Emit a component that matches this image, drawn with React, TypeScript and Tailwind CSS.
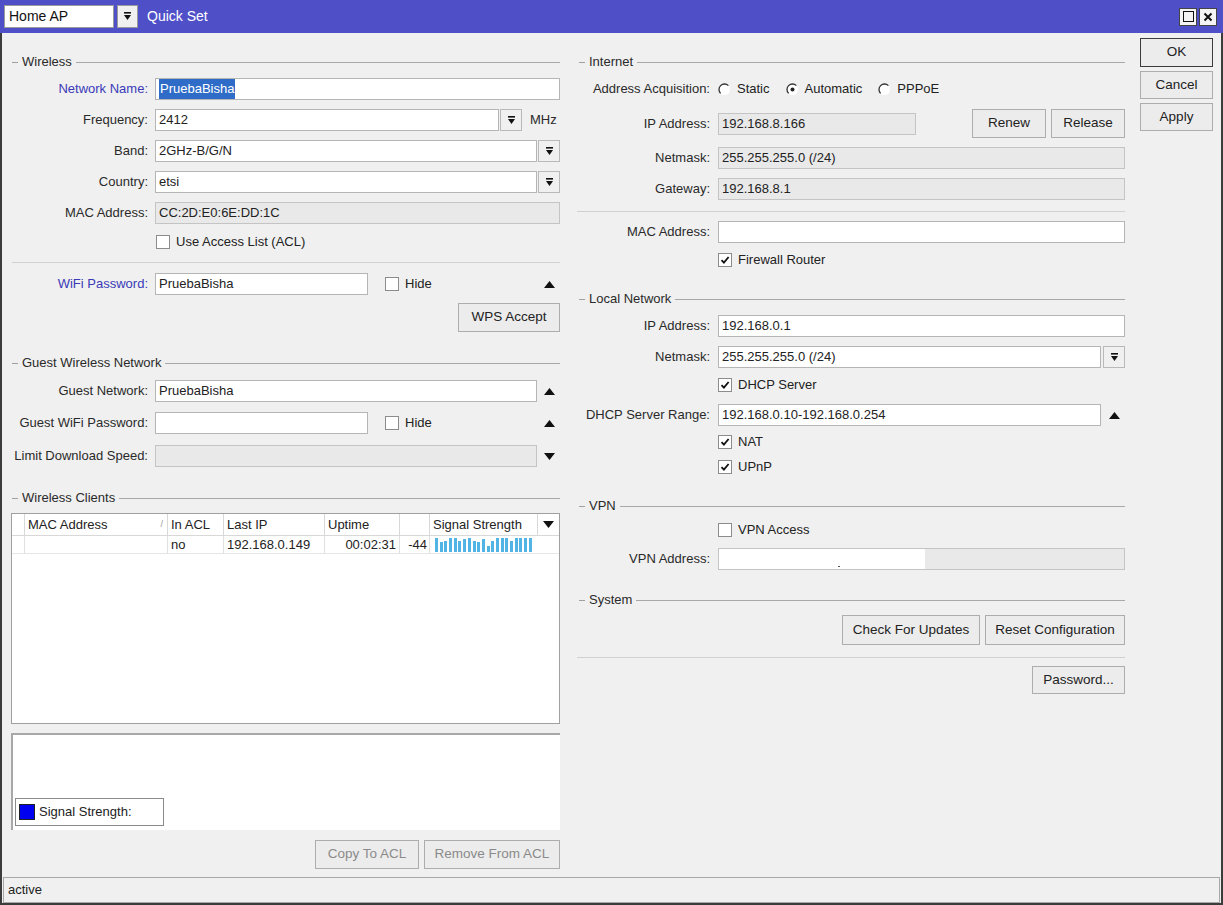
import React from "react";

const font = { fontFamily: '"Liberation Sans", Arial, sans-serif' };

function DropGlyph() {
	return (
		<svg width="9" height="9" viewBox="0 0 9 9">
			<rect x="1" y="0" width="7" height="1.6" fill="#111" />
			<path d="M1 3h7L4.5 8z" fill="#111" />
		</svg>
	);
}

function Tri({ up }: { up?: boolean }) {
	return (
		<svg width="11" height="7" viewBox="0 0 11 7">
			{up ? <path d="M0 7h11L5.5 0z" fill="#111" /> : <path d="M0 0h11L5.5 7z" fill="#111" />}
		</svg>
	);
}

function DropBtn() {
	return (
		<div className="-ml-[6px] w-[22px] h-[22px] border border-[#b9b9b9] bg-[#f0f0f0] flex items-center justify-center shrink-0">
			<DropGlyph />
		</div>
	);
}

function TriSlot({ up }: { up?: boolean }) {
	return (
		<div className="-ml-[6px] w-[22px] shrink-0 flex justify-center">
			<Tri up={up} />
		</div>
	);
}

function Field({
	value = "",
	w,
	gray,
	selected,
}: {
	value?: string;
	w?: string;
	gray?: boolean;
	selected?: boolean;
}) {
	return (
		<div
			className={`h-[22px] border flex items-center px-[3px] text-[13px] text-[#222] ${
				gray ? "bg-[#e9e9e9] border-[#c4c4c4]" : "bg-white border-[#b5b5b5]"
			} ${w ?? "flex-1"}`}
		>
			{selected ? <span className="bg-[#2f6cc8] text-white px-[1px]">{value}</span> : value}
		</div>
	);
}

function Label({ text, blue, w }: { text: string; blue?: boolean; w: string }) {
	return (
		<div className={`${w} shrink-0 text-right text-[13px] whitespace-nowrap ${blue ? "text-[#3a3ab8]" : "text-[#2a2a2a]"}`}>
			{text}
		</div>
	);
}

function Check({ label, checked }: { label: string; checked?: boolean }) {
	return (
		<div className="flex items-center gap-[6px] text-[13px] text-[#222]">
			<div className="w-[14px] h-[14px] bg-white border border-[#8c8c8c] flex items-center justify-center">
				{checked && (
					<svg width="10" height="10" viewBox="0 0 10 10">
						<path d="M1.5 5.2l2.4 2.4L8.6 2" stroke="#111" strokeWidth="1.8" fill="none" />
					</svg>
				)}
			</div>
			{label}
		</div>
	);
}

function Radio({ label, checked }: { label: string; checked?: boolean }) {
	return (
		<div className="flex items-center gap-[6px] text-[13px] text-[#222]">
			<svg width="13" height="13" viewBox="0 0 13 13">
				<circle cx="6.5" cy="6.5" r="5.5" fill="#fff" />
				<path d="M10.4 2.6A5.5 5.5 0 0 0 2.6 10.4" stroke="#333" strokeWidth="1.3" fill="none" />
				{checked && <circle cx="6.5" cy="6.5" r="2" fill="#222" />}
			</svg>
			{label}
		</div>
	);
}

function Btn({ text, w, h = "h-[29px]", disabled, strong }: { text: string; w: string; h?: string; disabled?: boolean; strong?: boolean }) {
	return (
		<div
			className={`${w} ${h} shrink-0 flex items-center justify-center text-[13.5px] bg-[#ececec] border ${
				strong ? "border-[#3c3c3c]" : "border-[#adadad]"
			} ${disabled ? "text-[#8a8a8a]" : "text-[#222]"}`}
		>
			{text}
		</div>
	);
}

function Group({ title, mt }: { title: string; mt: string }) {
	return (
		<div className={`${mt} h-[16px] flex items-center text-[13px] text-[#2a2a2a]`}>
			<div className="ml-[2px] w-[6px] h-px bg-[#a0a0a0]" />
			<span className="px-[4px]">{title}</span>
			<div className="flex-1 h-px bg-[#a8a8a8]" />
		</div>
	);
}

const bars = [14, 10, 11, 14, 14, 11, 13, 14, 11, 10, 13, 6, 11, 14, 14, 14, 11, 14, 14, 14, 14];

function LeftColumn() {
	const lw = "w-[138px]";
	return (
		<div className="w-[550px] flex flex-col">
			<Group title="Wireless" mt="mt-[21px]" />
			<div className="mt-[8px] flex items-center gap-[7px]">
				<Label text="Network Name:" blue w={lw} />
				<Field value="PruebaBisha" selected />
			</div>
			<div className="mt-[9px] flex items-center gap-[7px]">
				<Label text="Frequency:" w={lw} />
				<Field value="2412" />
				<DropBtn />
				<span className="ml-[1px] w-[30px] text-[13px] text-[#2a2a2a]">MHz</span>
			</div>
			<div className="mt-[9px] flex items-center gap-[7px]">
				<Label text="Band:" w={lw} />
				<Field value="2GHz-B/G/N" />
				<DropBtn />
			</div>
			<div className="mt-[9px] flex items-center gap-[7px]">
				<Label text="Country:" w={lw} />
				<Field value="etsi" />
				<DropBtn />
			</div>
			<div className="mt-[9px] flex items-center gap-[7px]">
				<Label text="MAC Address:" w={lw} />
				<Field value="CC:2D:E0:6E:DD:1C" gray />
			</div>
			<div className="mt-[8px] h-[20px] flex items-center pl-[146px]">
				<Check label="Use Access List (ACL)" />
			</div>
			<div className="mt-[10px] ml-[2px] h-px bg-[#d0d0d0]" />
			<div className="mt-[10px] flex items-center gap-[7px]">
				<Label text="WiFi Password:" blue w={lw} />
				<Field value="PruebaBisha" w="w-[213px]" />
				<div className="ml-[10px]">
					<Check label="Hide" />
				</div>
				<div className="flex-1" />
				<TriSlot up />
			</div>
			<div className="mt-[8px] flex justify-end">
				<Btn text="WPS Accept" w="w-[102px]" />
			</div>
			<Group title="Guest Wireless Network" mt="mt-[23px]" />
			<div className="mt-[9px] flex items-center gap-[7px]">
				<Label text="Guest Network:" w={lw} />
				<Field value="PruebaBisha" />
				<TriSlot up />
			</div>
			<div className="mt-[10px] flex items-center gap-[7px]">
				<Label text="Guest WiFi Password:" w={lw} />
				<Field w="w-[213px]" />
				<div className="ml-[10px]">
					<Check label="Hide" />
				</div>
				<div className="flex-1" />
				<TriSlot up />
			</div>
			<div className="mt-[11px] flex items-center gap-[7px]">
				<Label text="Limit Download Speed:" w={lw} />
				<Field gray />
				<TriSlot />
			</div>
			<Group title="Wireless Clients" mt="mt-[23px]" />
			<div className="mt-[7px] ml-[1px] h-[211px] bg-white border border-[#a0a0a0] text-[13px] text-[#222] flex flex-col">
				<div className="h-[22px] flex border-b border-[#d8d8d8]">
					<div className="w-[13px] border-r border-[#d8d8d8]" />
					<div className="w-[143px] border-r border-[#d8d8d8] flex items-center pl-[3px]">
						<span className="flex-1">MAC Address</span>
						<span className="text-[9px] text-[#999] pr-[4px]">/</span>
					</div>
					<div className="w-[56px] border-r border-[#d8d8d8] flex items-center pl-[3px]">In ACL</div>
					<div className="w-[101px] border-r border-[#d8d8d8] flex items-center pl-[3px]">Last IP</div>
					<div className="w-[75px] border-r border-[#d8d8d8] flex items-center pl-[3px]">Uptime</div>
					<div className="w-[30px] border-r border-[#d8d8d8]" />
					<div className="w-[108px] border-r border-[#d8d8d8] flex items-center pl-[3px]">Signal Strength</div>
					<div className="flex-1 flex items-center justify-center">
						<Tri />
					</div>
				</div>
				<div className="h-[18px] flex border-b border-[#e6e6e6]">
					<div className="w-[13px] border-r border-[#e0e0e0]" />
					<div className="w-[143px] border-r border-[#e0e0e0]" />
					<div className="w-[56px] border-r border-[#e0e0e0] flex items-center pl-[3px]">no</div>
					<div className="w-[101px] border-r border-[#e0e0e0] flex items-center pl-[3px]">192.168.0.149</div>
					<div className="w-[75px] border-r border-[#e0e0e0] flex items-center justify-end pr-[3px]">00:02:31</div>
					<div className="w-[30px] border-r border-[#e0e0e0] flex items-center justify-end pr-[2px]">-44</div>
					<div className="w-[108px] flex items-end gap-[1.7px] pl-[5px] pb-[1px]">
						{bars.map((h, i) => (
							<div key={i} className="w-[3px] bg-[#52b4e4]" style={{ height: h }} />
						))}
					</div>
					<div className="flex-1" />
				</div>
			</div>
			<div className="mt-[9px] ml-[1px] h-[97px] bg-white border-t-2 border-l-2 border-[#a8a8a8] flex flex-col justify-end pb-[4px] pl-[2px]">
				<div className="w-[149px] h-[28px] border border-[#8a8a8a] bg-white flex items-center gap-[4px] pl-[3px] text-[13px] text-[#222]">
					<div className="w-[16px] h-[16px] bg-[#0000f0] border border-[#222]" />
					Signal Strength:
				</div>
			</div>
			<div className="mt-[10px] flex justify-end gap-[5px]">
				<Btn text="Copy To ACL" w="w-[104px]" disabled />
				<Btn text="Remove From ACL" w="w-[136px]" disabled />
			</div>
		</div>
	);
}

function RightColumn() {
	const lw = "w-[133px]";
	return (
		<div className="w-[548px] flex flex-col">
			<Group title="Internet" mt="mt-[21px]" />
			<div className="mt-[9px] h-[20px] flex items-center gap-[8px]">
				<Label text="Address Acquisition:" w={lw} />
				<div className="flex items-center gap-[16px]">
					<Radio label="Static" />
					<Radio label="Automatic" checked />
					<Radio label="PPPoE" />
				</div>
			</div>
			<div className="mt-[10px] h-[29px] flex items-center gap-[8px]">
				<Label text="IP Address:" w={lw} />
				<Field value="192.168.8.166" gray w="w-[198px]" />
				<div className="flex-1" />
				<div className="flex gap-[5px]">
					<Btn text="Renew" w="w-[74px]" />
					<Btn text="Release" w="w-[74px]" />
				</div>
			</div>
			<div className="mt-[9px] flex items-center gap-[8px]">
				<Label text="Netmask:" w={lw} />
				<Field value="255.255.255.0 (/24)" gray />
			</div>
			<div className="mt-[9px] flex items-center gap-[8px]">
				<Label text="Gateway:" w={lw} />
				<Field value="192.168.8.1" gray />
			</div>
			<div className="mt-[11px] h-px bg-[#d0d0d0]" />
			<div className="mt-[9px] flex items-center gap-[8px]">
				<Label text="MAC Address:" w={lw} />
				<Field />
			</div>
			<div className="mt-[7px] h-[20px] flex items-center pl-[141px]">
				<Check label="Firewall Router" checked />
			</div>
			<Group title="Local Network" mt="mt-[21px]" />
			<div className="mt-[8px] flex items-center gap-[8px]">
				<Label text="IP Address:" w={lw} />
				<Field value="192.168.0.1" />
			</div>
			<div className="mt-[9px] flex items-center gap-[8px]">
				<Label text="Netmask:" w={lw} />
				<Field value="255.255.255.0 (/24)" />
				<DropBtn />
			</div>
			<div className="mt-[7px] h-[20px] flex items-center pl-[141px]">
				<Check label="DHCP Server" checked />
			</div>
			<div className="mt-[9px] flex items-center gap-[8px]">
				<Label text="DHCP Server Range:" w={lw} />
				<Field value="192.168.0.10-192.168.0.254" />
				<TriSlot up />
			</div>
			<div className="mt-[6px] h-[20px] flex items-center pl-[141px]">
				<Check label="NAT" checked />
			</div>
			<div className="mt-[5px] h-[20px] flex items-center pl-[141px]">
				<Check label="UPnP" checked />
			</div>
			<Group title="VPN" mt="mt-[21px]" />
			<div className="mt-[6px] h-[20px] flex items-center pl-[141px]">
				<Check label="VPN Access" />
			</div>
			<div className="mt-[8px] flex items-center gap-[8px]">
				<Label text="VPN Address:" w={lw} />
				<div className="flex-1 h-[22px] border border-[#c4c4c4] bg-[#e9e9e9] flex">
					<div className="w-[206px] h-full bg-white relative">
						<div className="absolute left-[119px] bottom-[2px] w-[2px] h-px bg-[#555]" />
					</div>
				</div>
			</div>
			<Group title="System" mt="mt-[22px]" />
			<div className="mt-[7px] flex justify-end gap-[5px]">
				<Btn text="Check For Updates" w="w-[138px]" h="h-[30px]" />
				<Btn text="Reset Configuration" w="w-[140px]" h="h-[30px]" />
			</div>
			<div className="mt-[12px] h-px bg-[#d0d0d0]" />
			<div className="mt-[8px] flex justify-end">
				<Btn text="Password..." w="w-[93px]" h="h-[28px]" />
			</div>
		</div>
	);
}

export default function App() {
	return (
		<div className="w-[1223px] h-[905px] bg-[#f0f0f0] flex flex-col overflow-hidden" style={font}>
			<div className="h-[33px] shrink-0 bg-[#4f4fc8] flex items-center pl-[4px] pr-[6px]">
				<div className="w-[110px] h-[23px] bg-white border border-[#9a9a9a] flex items-center pl-[4px] text-[14px] text-[#111]">
					Home AP
				</div>
				<div className="ml-[3px] w-[21px] h-[23px] bg-[#f0f0f0] border border-[#9a9a9a] flex items-center justify-center">
					<DropGlyph />
				</div>
				<span className="ml-[9px] text-[14px] text-white">Quick Set</span>
				<div className="flex-1" />
				<div className="flex gap-[2px]">
					<div className="w-[18px] h-[18px] bg-[#f4f4f4] border border-[#444] flex items-center justify-center">
						<div className="w-[11px] h-[11px] border-[1.5px] border-[#111]" />
					</div>
					<div className="w-[18px] h-[18px] bg-[#f4f4f4] border border-[#444] flex items-center justify-center">
						<svg width="10" height="10" viewBox="0 0 10 10">
							<path d="M1.5 1.5l7 7M8.5 1.5l-7 7" stroke="#111" strokeWidth="2" />
						</svg>
					</div>
				</div>
			</div>
			<div className="flex-1 flex flex-col border-l-2 border-r-2 border-b-2 border-[#3c3c3c]">
				<div className="h-[844px] flex pl-[8px]">
					<LeftColumn />
					<div className="ml-[17px]">
						<RightColumn />
					</div>
					<div className="ml-[15px] flex flex-col">
						<div className="mt-[5px]">
							<Btn text="OK" w="w-[73px]" strong />
						</div>
						<div className="mt-[4px]">
							<Btn text="Cancel" w="w-[73px]" h="h-[28px]" />
						</div>
						<div className="mt-[4px]">
							<Btn text="Apply" w="w-[73px]" h="h-[28px]" />
						</div>
					</div>
				</div>
				<div className="mx-[1px] h-[26px] border border-[#a8a8a8] flex items-center pl-[4px] text-[13px] text-[#222]">
					active
				</div>
			</div>
		</div>
	);
}
